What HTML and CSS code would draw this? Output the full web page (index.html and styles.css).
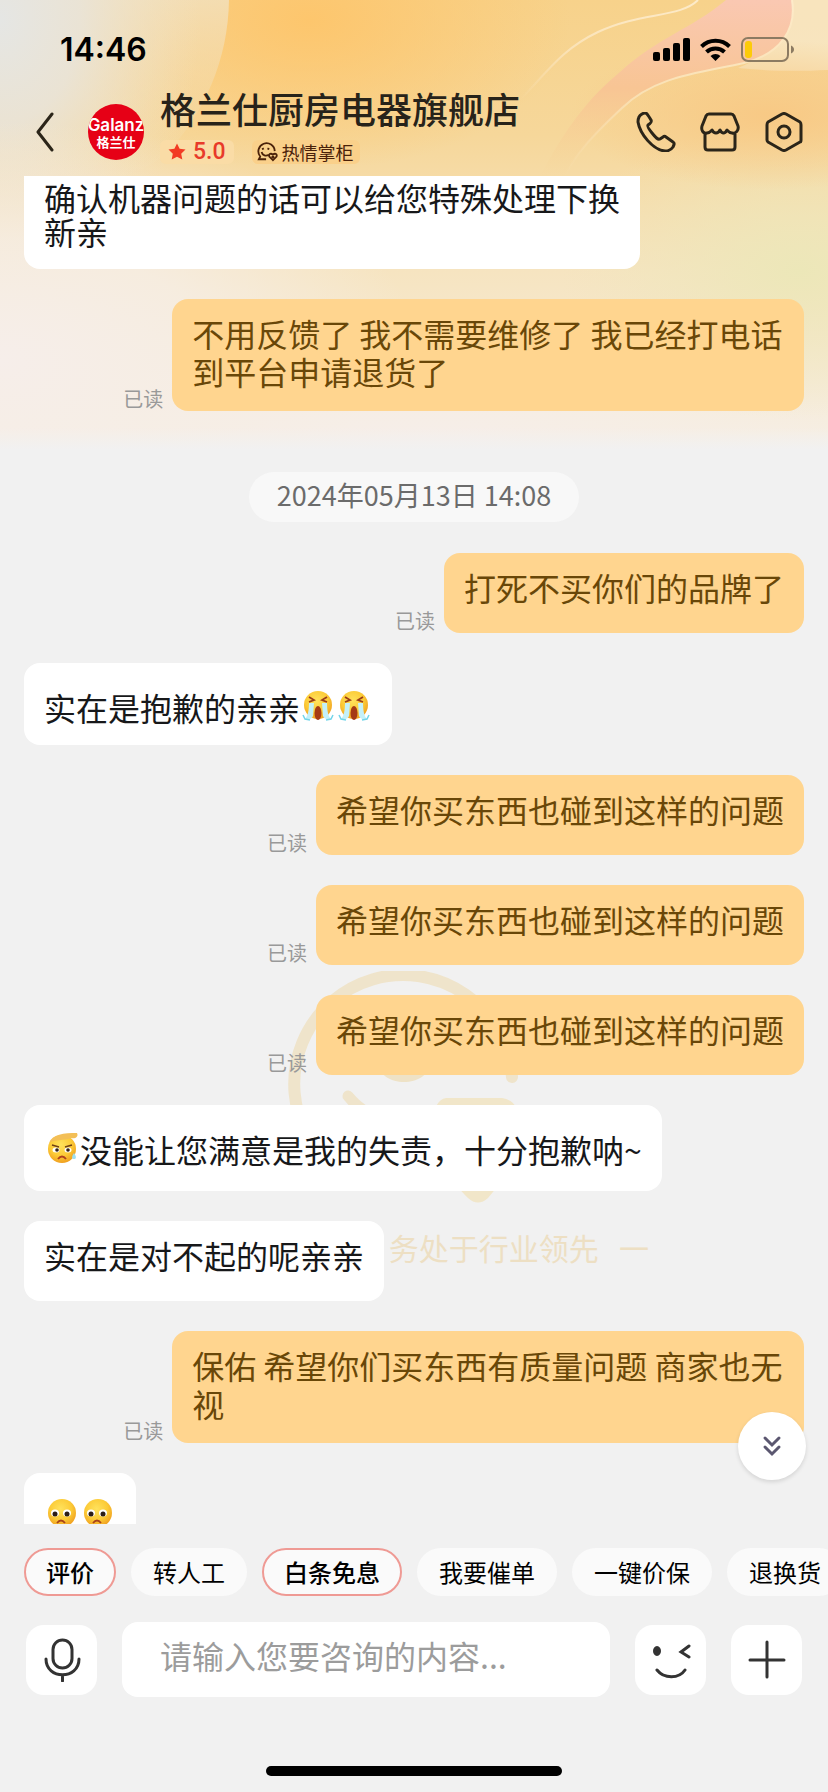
FILE: index.html
```html
<!DOCTYPE html>
<html lang="zh-CN">
<head>
<meta charset="utf-8">
<meta name="viewport" content="width=device-width, initial-scale=1">
<title>格兰仕厨房电器旗舰店</title>
<link rel="stylesheet" href="styles.css">
</head>
<body>
<svg class="backdrop" viewBox="0 0 828 450" preserveAspectRatio="none" aria-hidden="true">
  <defs>
    <linearGradient id="base" x1="0" y1="0" x2="0" y2="1">
      <stop offset="0" stop-color="#f7d28b"/><stop offset=".3" stop-color="#f6d79a"/><stop offset=".6" stop-color="#f6e4c0"/><stop offset="1" stop-color="#f6efe6"/>
    </linearGradient>
    <radialGradient id="amber"><stop offset="0" stop-color="#fdc66d"/><stop offset="1" stop-color="#fdc66d" stop-opacity="0"/></radialGradient>
    <radialGradient id="grey"><stop offset="0" stop-color="#e5e6e4"/><stop offset=".4" stop-color="#e9e4d9" stop-opacity=".9"/><stop offset="1" stop-color="#f0e3c8" stop-opacity="0"/></radialGradient>
    <radialGradient id="mist"><stop offset="0" stop-color="#f6eeea"/><stop offset=".5" stop-color="#f6eee6" stop-opacity=".8"/><stop offset="1" stop-color="#f6eee6" stop-opacity="0"/></radialGradient>
    <radialGradient id="lime"><stop offset="0" stop-color="#ece7b8"/><stop offset="1" stop-color="#efe6bd" stop-opacity="0"/></radialGradient>
    <radialGradient id="glow"><stop offset="0" stop-color="#f8c985"/><stop offset="1" stop-color="#f8c985" stop-opacity="0"/></radialGradient>
    <linearGradient id="petal" x1="0" y1="0" x2="0" y2="1"><stop offset="0" stop-color="#fac8b2"/><stop offset=".5" stop-color="#f8c594"/><stop offset="1" stop-color="#f6d496" stop-opacity="0"/></linearGradient>
    <linearGradient id="edge" x1="0" y1="0" x2="0" y2="1"><stop offset="0" stop-color="#fdebca"/><stop offset=".5" stop-color="#fae2b6"/><stop offset="1" stop-color="#fae2b6" stop-opacity="0"/></linearGradient>
    <linearGradient id="left" x1="0" y1="0" x2="0" y2="1"><stop offset="0" stop-color="#f2e1bf" stop-opacity=".8"/><stop offset="1" stop-color="#f4dfb3" stop-opacity="0"/></linearGradient>
    <linearGradient id="fade" x1="0" y1="0" x2="0" y2="1"><stop offset="0" stop-color="#f1f1f1" stop-opacity="0"/><stop offset="1" stop-color="#f1f1f1"/></linearGradient>
  </defs>
  <path fill="url(#base)" d="M0 0h828v450H0z"/>
  <ellipse fill="url(#amber)" cx="310" cy="20" rx="260" ry="150"/>
  <path fill="url(#left)" d="M0 0H229C228 60 205 110 170 150C140 180 80 190 0 190z"/>
  <ellipse fill="url(#grey)" cx="0" cy="20" rx="200" ry="260"/>
  <ellipse fill="url(#mist)" cx="0" cy="360" rx="420" ry="240"/>
  <ellipse fill="url(#mist)" cx="420" cy="450" rx="420" ry="110"/>
  <ellipse fill="url(#lime)" cx="800" cy="270" rx="240" ry="150"/>
  <path fill="#f8e8c9" d="M792 0h36v70c-40 2-70 0-90-2C780 50 796 30 792 0z" opacity=".8"/>
  <ellipse fill="url(#glow)" cx="770" cy="115" rx="200" ry="75"/>
  <path fill="url(#petal)" d="M726 0H792C797 30 780 54 744 63C700 73 655 76 622 108C590 138 575 155 565 176H540C560 140 580 105 620 72C660 36 690 30 726 0z"/>
  <path fill="none" stroke="url(#edge)" stroke-width="2" d="M698 0C680 18 640 12 598 32C560 50 545 75 520 100"/>
  <path fill="none" stroke="url(#edge)" stroke-width="2" d="M792 0C797 30 780 54 744 63C700 73 655 76 622 108C590 138 575 155 565 176"/>
  <path fill="url(#fade)" d="M0 428h828v22H0z"/>
</svg>

<header class="top">
  <div class="status">
    <time class="status-time">14:46</time>
    <svg class="status-icons" viewBox="0 0 142 26" aria-label="信号 Wi-Fi 电量">
      <g><rect x="0" y="15" width="7" height="9" rx="2"/><rect x="10" y="11" width="7" height="13" rx="2"/><rect x="20" y="6" width="7" height="18" rx="2"/><rect x="30" y="1" width="7" height="23" rx="2"/></g>
      <g fill="none" stroke="#000" stroke-width="4"><path d="M48.500 9.500a20 20 0 0 1 28 0"/><path d="M53.500 15a13 13 0 0 1 18 0"/></g>
      <path d="M62.500 24l-5-5a7.500 7.500 0 0 1 10 0z"/>
      <rect x="89" y="1" width="46" height="23" rx="6" fill="none" stroke="#8c7b62" stroke-width="2"/>
      <rect x="92" y="4" width="7" height="17" rx="3" fill="#fdcb0a"/>
      <path d="M138 8.500c4 1.500 4 6.500 0 8z" fill="#8c7b62"/>
    </svg>
  </div>
  <div class="shop">
    <button class="icon-btn back" aria-label="返回"><svg viewBox="0 0 18 40"><path d="M16 2L2 20l14 18"/></svg></button>
    <div class="avatar"><span class="avatar-en">Galanz</span><span class="avatar-cn">格兰仕</span></div>
    <div class="shop-info">
      <h1 class="shop-name">格兰仕厨房电器旗舰店</h1>
      <div class="tags">
        <span class="rating"><svg viewBox="0 0 18 18" aria-hidden="true"><path d="M9 .5l2.600 5.300 5.900.8-4.300 4.100 1.100 5.900L9 13.800l-5.300 2.800 1.100-5.900L.5 6.600l5.900-.8z"/></svg>5.0</span>
        <span class="badge"><svg viewBox="0 0 24 22" aria-hidden="true"><path d="M11 19H3l1.500-3A9 9 0 1 1 20.500 10M6.500 8l2-1M12.500 7l2 1M6 11c1 4 5 5 8 3"/><path d="M18.500 20l-4-4c-1-3 2-4 4-2 2-2 5-1 4 2z"/><path d="M17 16l1.500 1.200L20 16"/></svg>热情掌柜</span>
      </div>
    </div>
    <nav class="actions">
      <button class="icon-btn" aria-label="电话"><svg viewBox="0 0 40 40"><path d="M3 5c1-2 4-4 6-4 2 0 3 2 6 7 1 2 0 3-3 5-1 1 0 3 4 8s6 7 8 6l3-2c1-1 2-1 3 0l7 5c2 1 1 3 0 5-2 3-5 4-8 4C17 38 4 22 2 10c0-2 0-3 1-5z"/></svg></button>
      <button class="icon-btn" aria-label="店铺"><svg viewBox="0 0 40 40"><path d="M9 2h22q2 0 3 2l4 10c1 4-2 8-6 7-3 0-4-2-5-3-2 4-5 4-7 0-2 4-6 4-8 0-1 1-2 3-5 3-4 1-6-3-5-7L6 4q1-2 3-2zM5 21v14q0 3 3 3h24q3 0 3-3V21"/></svg></button>
      <button class="icon-btn" aria-label="设置"><svg viewBox="0 0 40 40"><path d="M18 2q2-1 4 0l14 8q1 1 1 3v15q0 2-1 2l-14 8q-2 1-4 0L4 30q-1-1-1-2V13q0-2 1-3z"/><circle cx="20" cy="20" r="6"/></svg></button>
    </nav>
  </div>
</header>

<main class="chat">
  <div class="watermark" aria-hidden="true">
    <svg viewBox="0 0 240 240">
      <path d="M24 166A109 109 0 1 1 228 106" fill="none" stroke="#efe4cb" stroke-width="12" stroke-linecap="round"/>
      <path d="M92 90h56c-4 28-52 28-56 0z" fill="#eee2c6"/>
      <path d="M64 125q16 20 44 26" fill="none" stroke="#efe4cb" stroke-width="11" stroke-linecap="round"/>
      <path d="M162 127h56q16 2 18 23c0 44-20 62-32 77q-10 9-20 0c-14-15-34-33-34-77q0-21 12-23z" fill="#f1e6c9"/>
    </svg>
    <p class="watermark-text">务处于行业领先&nbsp; &nbsp;一</p>
  </div>

  <div class="row"><p class="bubble bubble--cut">确认机器问题的话可以给您特殊处理下换新亲</p></div>
  <div class="row row--me"><span class="read">已读</span><p class="bubble">不用反馈了 我不需要维修了 我已经打电话到平台申请退货了</p></div>
  <time class="date">2024年05月13日 14:08</time>
  <div class="row row--me"><span class="read">已读</span><p class="bubble">打死不买你们的品牌了</p></div>
  <div class="row"><p class="bubble bubble--mixed">实在是抱歉的亲亲<svg class="emoji" viewBox="0 0 36 30" role="img" aria-label="大哭"><use href="#cry"/></svg><svg class="emoji" viewBox="0 0 36 30" role="img" aria-label="大哭"><use href="#cry"/></svg></p></div>
  <div class="row row--me"><span class="read">已读</span><p class="bubble">希望你买东西也碰到这样的问题</p></div>
  <div class="row row--me"><span class="read">已读</span><p class="bubble">希望你买东西也碰到这样的问题</p></div>
  <div class="row row--me"><span class="read">已读</span><p class="bubble">希望你买东西也碰到这样的问题</p></div>
  <div class="row"><p class="bubble bubble--mixed bubble--tall"><svg class="emoji" viewBox="0 0 36 30" role="img" aria-label="流汗"><use href="#sweat"/></svg>没能让您满意是我的失责，十分抱歉呐~</p></div>
  <div class="row"><p class="bubble">实在是对不起的呢亲亲</p></div>
  <div class="row row--me"><span class="read">已读</span><p class="bubble">保佑 希望你们买东西有质量问题 商家也无视</p></div>
  <div class="row"><p class="bubble bubble--emoji"><svg class="emoji" viewBox="0 0 36 30" role="img" aria-label="难过"><use href="#sad"/></svg><svg class="emoji" viewBox="0 0 36 30" role="img" aria-label="难过"><use href="#sad"/></svg></p></div>

  <button class="jump" aria-label="回到底部"><svg viewBox="0 0 20 22"><path d="M3 3l7 7 7-7M3 12l7 7 7-7"/></svg></button>
</main>

<footer class="composer">
  <div class="chips">
    <button class="chip chip--hot">评价</button>
    <button class="chip">转人工</button>
    <button class="chip chip--hot">白条免息</button>
    <button class="chip">我要催单</button>
    <button class="chip">一键价保</button>
    <button class="chip">退换货</button>
  </div>
  <div class="entry">
    <button class="tool" aria-label="语音"><svg viewBox="0 0 40 44"><rect x="11" y="2" width="19" height="28" rx="9.500"/><path d="M4 21c0 21 33 21 33 0M20.500 37v6"/></svg></button>
    <input class="field" type="text" aria-label="咨询内容" placeholder="请输入您要咨询的内容...">
    <button class="tool" aria-label="表情"><svg viewBox="0 0 40 44"><ellipse cx="6" cy="13" rx="2.500" ry="3.500" fill="#333"/><path d="M38 8l-8 6 8 5M6 32c7 9 22 9 28 0"/></svg></button>
    <button class="tool" aria-label="更多"><svg viewBox="0 0 40 44"><path d="M20 4v35M3 22h34"/></svg></button>
  </div>
  <div class="home-bar"></div>
</footer>

<svg class="symbols" aria-hidden="true">
  <defs>
    <radialGradient id="face" cx=".45" cy=".35" r=".65"><stop offset="0" stop-color="#ffe25c"/><stop offset=".6" stop-color="#fccb37"/><stop offset="1" stop-color="#f0a020"/></radialGradient>
    <symbol id="cry" viewBox="0 0 36 30">
      <circle cx="18" cy="14" r="14" fill="url(#face)"/>
      <path d="M9 12h5l-1 13c-1 3-5 4-8 3 3-3 4-9 4-16zM22 12h5c0 7 1 13 4 16-3 1-7 0-8-3z" fill="#c4f0f8"/>
      <path d="M3 24l2 4 5 1M33 24l-2 4-5 1" fill="none" stroke="#72d5ea" stroke-width="1.500"/>
      <ellipse cx="18" cy="22" rx="3.500" ry="7" fill="#a53a15"/>
      <path d="M9 6l5 3-5 2M27 6l-5 3 5 2" fill="none" stroke="#9a3c18" stroke-width="1.800"/>
    </symbol>
    <symbol id="sweat" viewBox="0 0 36 30">
      <circle cx="18" cy="16" r="14" fill="url(#face)"/>
      <path d="M5 10C8 1 20 0 33 0c2 4-2 6-6 5C20 8 10 6 5 10z" fill="#f3bf57"/>
      <ellipse cx="12" cy="17" rx="3.500" ry="2.500" fill="#fff"/><ellipse cx="24" cy="17" rx="3.500" ry="2.500" fill="#fff"/>
      <circle cx="13" cy="17" r="1.800" fill="#33231a"/><circle cx="24" cy="17" r="1.800" fill="#33231a"/>
      <path d="M8 12l7 2M28 12l-7 2" stroke="#704015" stroke-width="1.500"/>
      <path d="M14 26q4-5 8 0" fill="none" stroke="#b0401c" stroke-width="2"/>
      <path d="M30 20c3 4 2 6 0 6s-3-2 0-6z" fill="#9fdff0"/>
    </symbol>
    <symbol id="sad" viewBox="0 0 36 30">
      <circle cx="18" cy="15" r="14" fill="url(#face)"/>
      <ellipse cx="11" cy="15" rx="4" ry="3.500" fill="#fff"/><ellipse cx="23" cy="15" rx="4" ry="3.500" fill="#fff"/>
      <circle cx="11" cy="16" r="2.500" fill="#2b1d17"/><circle cx="23" cy="16" r="2.500" fill="#2b1d17"/>
      <path d="M13 25q4-5 8 0" fill="none" stroke="#a8421a" stroke-width="1.800"/>
    </symbol>
  </defs>
</svg>
</body>
</html>
```
FILE: styles.css
```css
* { box-sizing: border-box; }

body {
  position: relative;
  display: flex;
  flex-direction: column;
  height: 100vh;
  margin: 0;
  overflow: hidden;
  background: #f1f1f1;
  color: #17181a;
  font-family: "Noto Sans CJK SC", "Noto Sans", sans-serif;
}

h1, p { margin: 0; }

button, input {
  margin: 0;
  padding: 0;
  border: 0;
  font-family: inherit;
}

.backdrop {
  position: absolute;
  top: 0;
  left: 0;
  width: 100%;
  height: 450px;
}

.symbols {
  position: absolute;
  width: 0;
  height: 0;
}

/* Header */
.top {
  position: relative;
  flex: none;
}

.status {
  display: flex;
  align-items: center;
  justify-content: space-between;
  height: 88px;
  padding: 12px 33px 0 60px;
}

.status-time {
  color: #000;
  font: 600 32px/40px Inter, sans-serif;
}

.status-icons {
  width: 142px;
  height: 26px;
}

.shop {
  display: flex;
  height: 88px;
  padding: 0 24px 0 36px;
}

.icon-btn {
  display: flex;
  background: none;
}

.icon-btn svg {
  width: 40px;
  height: 40px;
  fill: none;
  stroke: #2b2519;
  stroke-width: 3;
  stroke-linejoin: round;
  stroke-linecap: round;
}

.back {
  width: 52px;
  padding-top: 24px;
}

.back svg { width: 18px; }

.avatar {
  display: flex;
  flex: none;
  flex-direction: column;
  align-items: center;
  width: 56px;
  height: 56px;
  margin: 16px 16px 0 0;
  padding-top: 12px;
  overflow: hidden;
  border-radius: 50%;
  background: #e60016;
  color: #fff;
}

.avatar-en { font: 600 17px/18px Inter, sans-serif; }
.avatar-cn { font-size: 13px; font-weight: 700; line-height: 16px; }

.shop-info {
  flex: 1;
  min-width: 0;
}

.shop-name {
  color: #27231a;
  font-size: 36px;
  font-weight: 500;
  line-height: 40px;
  white-space: nowrap;
}

.tags {
  display: flex;
  gap: 18px;
  margin-top: 12px;
}

.rating, .badge {
  display: flex;
  align-items: center;
  height: 24px;
  border-radius: 6px;
}

.rating {
  gap: 7px;
  padding: 0 8px;
  background: #fadca6;
  color: #e83a2a;
  font: 500 23px/24px Roboto, sans-serif;
}

.rating svg {
  width: 18px;
  height: 18px;
  fill: #f23b24;
}

.badge {
  gap: 4px;
  padding: 0 6px 0 4px;
  background: #fad08a;
  color: #4a2109;
  font-size: 18px;
  line-height: 22px;
}

.badge svg {
  width: 22px;
  height: 20px;
  fill: none;
  stroke: #4a2109;
  stroke-width: 2;
}

.actions {
  display: flex;
  align-items: flex-start;
  gap: 24px;
  padding-top: 24px;
}

/* Conversation */
.chat {
  position: relative;
  display: flex;
  flex: 1;
  flex-direction: column;
  gap: 30px;
  min-height: 0;
  padding: 0 24px;
  overflow: hidden;
}

.row {
  position: relative;
  display: flex;
  flex: none;
  align-items: flex-end;
  gap: 9px;
}

.row--me { justify-content: flex-end; }

.bubble {
  max-width: 81%;
  min-height: 80px;
  padding: 15px 20px 21px;
  border-radius: 16px;
  background: #fff;
  font-size: 32px;
  line-height: 38px;
}

.row--me .bubble {
  background: #ffd58f;
  color: #694708;
}

.bubble--cut {
  max-width: 79%;
  padding: 4px 20px 21px;
  border-radius: 0 0 16px 16px;
  line-height: 34px;
}

.bubble--mixed {
  padding: 23px 20px 17px;
  line-height: 42px;
}

.bubble--tall {
  max-width: 86%;
  min-height: 86px;
}

.bubble--emoji {
  padding: 20px;
  line-height: 42px;
}

.emoji {
  width: 36px;
  height: 30px;
  vertical-align: 0;
}

.read {
  color: #999;
  font-size: 20px;
  line-height: 24px;
}

.date {
  flex: none;
  align-self: center;
  margin: 31px 0 1px;
  padding: 0 28px 4px;
  border-radius: 25px;
  background: #f8f8f8;
  color: #6b6b6b;
  font-size: 27px;
  line-height: 46px;
}

.watermark {
  position: absolute;
  top: 795px;
  left: 50%;
  width: 470px;
  transform: translateX(-50%);
}

.watermark svg {
  display: block;
  width: 240px;
  height: 240px;
  margin-left: 105px;
}

.watermark-text {
  margin-top: 16px;
  color: #eddfc3;
  font-size: 30px;
  line-height: 40px;
  text-align: right;
}

.jump {
  position: absolute;
  right: 22px;
  bottom: 44px;
  display: grid;
  place-items: center;
  width: 68px;
  height: 68px;
  border-radius: 50%;
  background: #fff;
  box-shadow: 0 2px 4px rgba(0, 0, 0, .12);
}

.jump svg {
  width: 20px;
  height: 22px;
  fill: none;
  stroke: #5b5770;
  stroke-width: 3;
  stroke-linecap: round;
}

/* Composer */
.composer {
  position: relative;
  flex: none;
  padding: 24px 0 16px;
}

.chips {
  display: flex;
  gap: 15px;
  padding-left: 24px;
  overflow: hidden;
}

.chip {
  flex: none;
  height: 48px;
  padding: 0 22px 2px;
  border-radius: 24px;
  background: #fafafa;
  color: #000;
  font-size: 24px;
}

.chip--hot {
  padding: 0 20px 2px;
  border: 2px solid #ef9a94;
  font-weight: 500;
}

.entry {
  display: flex;
  align-items: center;
  gap: 25px;
  margin-top: 26px;
  padding: 0 26px;
}

.tool {
  display: grid;
  flex: none;
  place-items: center;
  width: 71px;
  height: 70px;
  border-radius: 18px;
  background: #fff;
}

.tool svg {
  width: 40px;
  height: 44px;
  fill: none;
  stroke: #333;
  stroke-width: 3;
  stroke-linecap: round;
}

.field {
  flex: 1;
  min-width: 0;
  height: 75px;
  padding: 0 38px 10px;
  border-radius: 16px;
  background: #fff;
  font-size: 32px;
}

.field::placeholder { color: #9c9c9c; opacity: 1; }

.home-bar {
  width: 296px;
  height: 10px;
  margin: 69px auto 0;
  border-radius: 5px;
  background: #000;
}
```
